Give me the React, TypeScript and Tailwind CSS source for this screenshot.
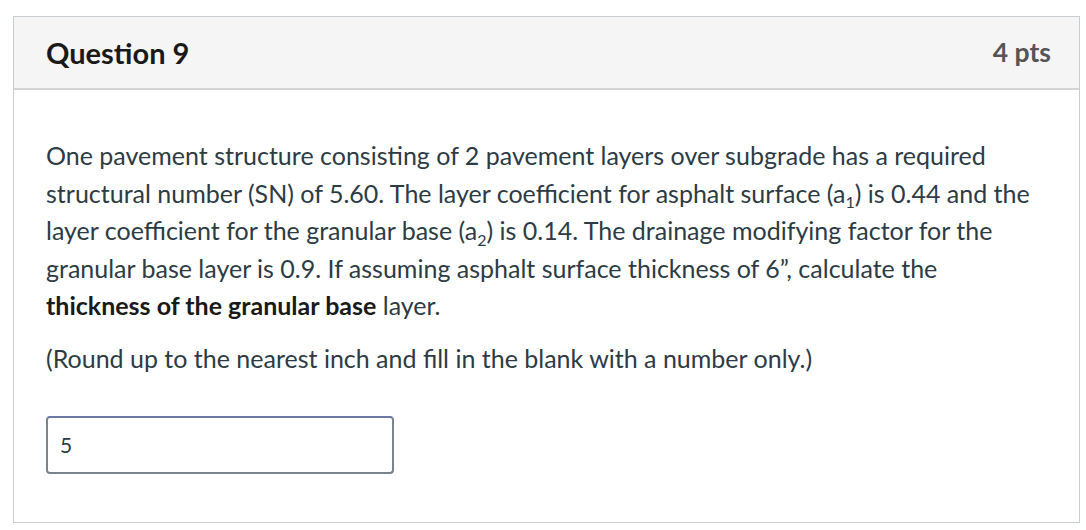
export default function App() {
  const sub = "relative top-[0.35em] text-[16px] leading-none align-baseline";
  return (
    <div className="w-[1086px] h-[530px] bg-white pt-4 pl-[13px] pr-[6px] pb-2" style={{ fontFamily: "Lato, 'Noto Sans', sans-serif" }}>
      <div className="border border-[#c7cdd1] h-[507px] flex flex-col">
        <div className="bg-[#f5f5f5] border-b-2 border-[#d5d5d5] h-[73px] flex items-center justify-between pl-8 pr-7">
          <span className="text-[29px] font-bold text-[#1a1a1a]">Question 9</span>
          <span className="text-[26.5px] font-bold text-[#555]">4 pts</span>
        </div>
        <div className="pl-8 pr-2 pt-[47px] text-[25px] leading-[37.5px] text-[#2d3b45] whitespace-nowrap">
          <p>
            One pavement structure consisting of 2 pavement layers over subgrade has a required<br />
            structural number (SN) of 5.60. The layer coefficient for asphalt surface (a<span className={sub}>1</span>) is 0.44 and the<br />
            layer coefficient for the granular base (a<span className={sub}>2</span>) is 0.14. The drainage modifying factor for the<br />
            granular base layer is 0.9. If assuming asphalt surface thickness of 6”, calculate the<br />
            <strong className="font-bold text-[#1a1a1a]">thickness of the granular base</strong> layer.
          </p>
          <p className="mt-[15px]">(Round up to the nearest inch and fill in the blank with a number only.)</p>
          <div className="mt-[39px] w-[348px] h-[58px] border-2 border-[#7a8590] border-t-[#6b78a8] rounded-[4px] flex items-center px-[12px] text-[21px] text-[#2d3b45]">
            5
          </div>
        </div>
      </div>
    </div>
  );
}
